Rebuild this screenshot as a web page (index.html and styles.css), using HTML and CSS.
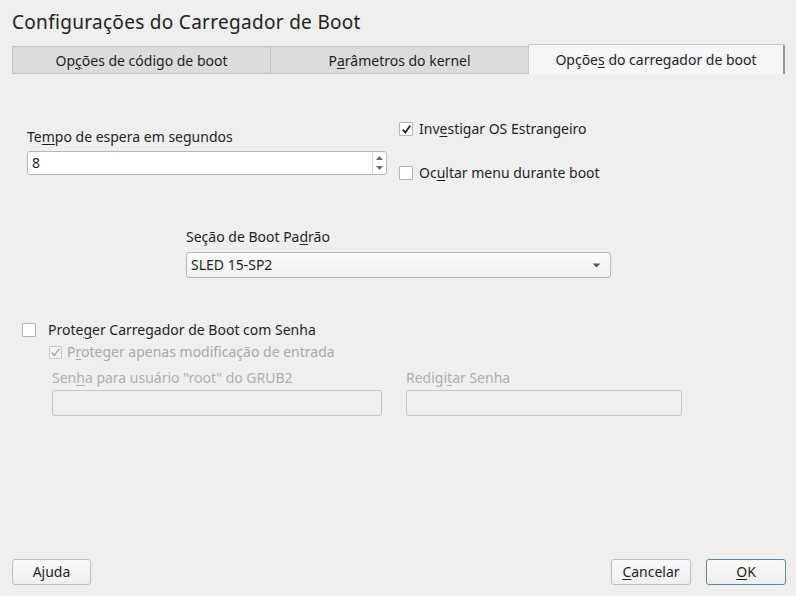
FILE: index.html
```html
<!DOCTYPE html>
<html lang="pt">
<head>
<meta charset="utf-8">
<title>Configurações do Carregador de Boot</title>
<link rel="stylesheet" href="styles.css">
</head>
<body>
<div class="dialog">
  <h1 class="title">Configurações do Carregador de Boot</h1>
  <div class="tabs">
    <div class="tab"><span>Op<u>ç</u>ões de código de boot</span></div>
    <div class="tab"><span>P<u>a</u>râmetros do kernel</span></div>
    <div class="tab active"><span>Opçõe<u>s</u> do carregador de boot</span></div>
  </div>
  <div class="panel">
    <div class="row-top">
      <div class="timeout">
        <div class="label">Te<u>m</u>po de espera em segundos</div>
        <div class="spin">
          <span class="spin-value">8</span>
          <span class="spin-btns">
            <svg width="9" height="20" viewBox="0 0 9 20"><path d="M1 7 L4.5 3 L8 7 Z" fill="#6a6a6a"/><path d="M1 13 L4.5 17 L8 13 Z" fill="#6a6a6a"/></svg>
          </span>
        </div>
      </div>
      <div class="checks">
        <label class="check"><span class="box checked"><svg width="11" height="11" viewBox="0 0 11 11"><path d="M1.8 5.6 L4.3 8.6 L9.3 1.6" fill="none" stroke="#1e1e1e" stroke-width="1.7"/></svg></span><span>Inv<u>e</u>stigar OS Estrangeiro</span></label>
        <label class="check second"><span class="box"></span><span>Oc<u>u</u>ltar menu durante boot</span></label>
      </div>
    </div>
    <div class="row-combo">
      <div class="label">Seção de Boot Pa<u>d</u>rão</div>
      <div class="combo">
        <span>SLED 15-SP2</span>
        <svg width="9" height="5" viewBox="0 0 9 5"><path d="M0.5 0.5 L4.5 4.5 L8.5 0.5 Z" fill="#5a5a5a"/></svg>
      </div>
    </div>
    <div class="row-protect">
      <label class="check"><span class="box"></span><span>Prote<u>g</u>er Carregador de Boot com Senha</span></label>
      <div class="protect-sub">
        <label class="check disabled"><span class="box checked"><svg width="11" height="11" viewBox="0 0 11 11"><path d="M1.8 5.6 L4.3 8.6 L9.3 1.6" fill="none" stroke="#a8a8a8" stroke-width="1.5"/></svg></span><span>P<u>r</u>oteger apenas modificação de entrada</span></label>
        <div class="pw-row">
          <div class="pw-field first">
            <div class="label disabled">Sen<u>h</u>a para usuário "root" do GRUB2</div>
            <div class="input disabled"></div>
          </div>
          <div class="pw-field second">
            <div class="label disabled">Redigi<u>t</u>ar Senha</div>
            <div class="input disabled"></div>
          </div>
        </div>
      </div>
    </div>
  </div>
  <div class="footer">
    <button class="btn">A<u>j</u>uda</button>
    <div class="spacer"></div>
    <button class="btn cancel"><u>C</u>ancelar</button>
    <button class="btn default"><u>O</u>K</button>
  </div>
</div>
</body>
</html>
```
FILE: styles.css
```css
* { box-sizing: border-box; }
html, body { margin: 0; padding: 0; }
body {
  background: #efefef;
  font-family: "Noto Sans", "Open Sans", sans-serif;
  font-size: 14px;
  color: #1f1f1f;
}
u { text-decoration-thickness: 1px; text-underline-offset: 2px; }
.dialog {
  width: 796px;
  height: 596px;
  display: flex;
  flex-direction: column;
  padding: 0 10px 11px 12px;
}
.title {
  margin: 9px 0 0 0;
  font-size: 19px;
  letter-spacing: 0.3px;
  font-weight: normal;
  line-height: 26px;
  height: 35px;
  color: #222;
}
.tabs {
  display: flex;
  align-items: flex-end;
  height: 30px;
}
.tab {
  width: 258px;
  height: 28px;
  background: #dcdcdc;
  border: 1px solid #c4c4c4;
  border-right: none;
  display: flex;
  align-items: center;
  justify-content: center;
  line-height: 20px;
  padding-top: 1px;
  white-space: nowrap;
}
.tab.active {
  width: 257px;
  height: 30px;
  background: #f6f6f6;
  border: 1px solid #c8c8c8;
  border-right: 2px solid #9a9a9a;
  border-bottom: none;
  border-radius: 2px 2px 0 0;
  padding-top: 0;
}
.panel {
  display: flex;
  flex-direction: column;
}
.label { line-height: 20px; white-space: nowrap; }
.row-top {
  display: flex;
  margin-top: 45px;
  padding-left: 15px;
}
.timeout { width: 360px; padding-top: 8px; }
.spin {
  margin-top: 4px;
  height: 24px;
  background: #fff;
  border: 1px solid #b8b8b8;
  border-radius: 3px;
  display: flex;
  align-items: center;
}
.spin-value { flex: 1; padding-left: 4px; line-height: 20px; }
.spin-btns {
  width: 14px;
  height: 22px;
  border-left: 1px solid #d8d8d8;
  display: flex;
  align-items: center;
  justify-content: center;
}
.checks { margin-left: 12px; display: flex; flex-direction: column; }
.check {
  display: flex;
  align-items: center;
  line-height: 20px;
  white-space: nowrap;
}
.check.second { margin-top: 24px; }
.box {
  width: 14px;
  height: 14px;
  background: #fff;
  border: 1px solid #b4b4b4;
  border-radius: 1px;
  margin-right: 6px;
  display: flex;
  align-items: center;
  justify-content: center;
}
.row-combo {
  margin-top: 44px;
  padding-left: 174px;
  width: 599px;
}
.combo {
  margin-top: 5px;
  height: 26px;
  background: linear-gradient(#fbfbfb, #f1f1f1);
  border: 1px solid #b8b8b8;
  border-radius: 3px;
  display: flex;
  align-items: center;
  justify-content: space-between;
  padding: 0 9px 0 4px;
  line-height: 20px;
}
.row-protect {
  margin-top: 42px;
  padding-left: 10px;
}
.row-protect > .check .box { margin-right: 12px; }
.protect-sub { padding-left: 27px; margin-top: 2px; }
.check.disabled { color: #a9a9a9; }
.check.disabled .box { background: #f3f3f3; border-color: #c8c8c8; width: 13px; height: 13px; margin-right: 5px; }
.pw-row { display: flex; margin-top: 6px; padding-left: 3px; }
.pw-field.first { width: 330px; }
.pw-field.second { width: 276px; margin-left: 24px; }
.label.disabled { color: #b0b0b0; }
.input {
  margin-top: 2px;
  height: 26px;
  border: 1px solid #c6c6c6;
  border-radius: 3px;
  background: #efefef;
}
.footer {
  margin-top: auto;
  display: flex;
  align-items: center;
}
.spacer { flex: 1; }
.btn {
  font: inherit;
  color: #1f1f1f;
  height: 26px;
  width: 79px;
  background: linear-gradient(#fafafa, #efefef);
  border: 1px solid #bdbdbd;
  border-radius: 3px;
  padding: 0;
  line-height: 20px;
}
.btn + .btn { margin-left: 15px; }
.btn.cancel { width: 80px; }
.btn.default { border-color: #5d87a8; width: 80px; }
```
